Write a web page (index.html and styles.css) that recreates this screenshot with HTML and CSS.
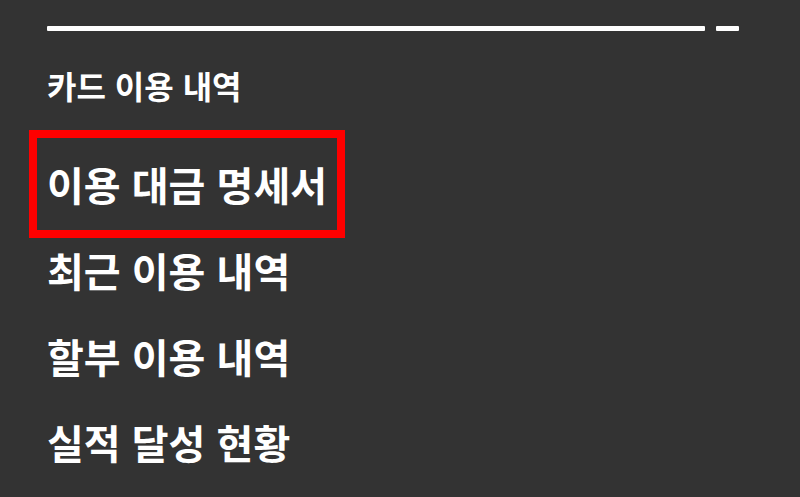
FILE: index.html
```html
<!DOCTYPE html>
<html lang="ko">
<head>
<meta charset="utf-8">
<link rel="stylesheet" href="styles.css">
</head>
<body>
<div class="page">
  <div class="rule">
    <span class="rule-long"></span>
    <span class="rule-short"></span>
  </div>
  <h2 class="section-title">카드 이용 내역</h2>
  <ul class="menu">
    <li class="menu-item selected">이용 대금 명세서</li>
    <li class="menu-item">최근 이용 내역</li>
    <li class="menu-item">할부 이용 내역</li>
    <li class="menu-item">실적 달성 현황</li>
  </ul>
</div>
</body>
</html>
```

FILE: styles.css
```css
html, body {
  margin: 0;
  padding: 0;
  background: #333333;
  height: 100%;
  overflow: hidden;
}
.page {
  padding: 26px 0 0 47px;
  font-family: "Noto Sans CJK KR", "Noto Sans", sans-serif;
  color: #ffffff;
}
.rule {
  display: flex;
  gap: 11px;
  height: 5px;
}
.rule-long {
  width: 658px;
  background: #ffffff;
  border-radius: 1px;
}
.rule-short {
  width: 23px;
  background: #ffffff;
  border-radius: 1px;
}
.section-title {
  margin: 34px 0 0 0;
  font-size: 32px;
  font-weight: 700;
  line-height: 40px;
}
.menu {
  list-style: none;
  margin: 36px 0 0 0;
  padding: 0;
}
.menu-item {
  font-size: 40px;
  font-weight: 700;
  line-height: 86px;
  width: max-content;
}
.menu-item.selected {
  position: relative;
}
.menu-item.selected::after {
  content: "";
  position: absolute;
  top: -11px;
  bottom: -11px;
  left: -18px;
  right: -18px;
  border: 8px solid #ff0000;
}
```
